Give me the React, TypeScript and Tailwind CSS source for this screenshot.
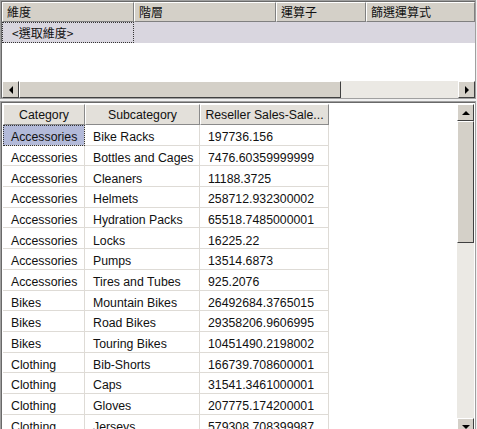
import React from 'react';

const rows: [string, string, string][] = [
  ['Accessories', 'Bike Racks', '197736.156'],
  ['Accessories', 'Bottles and Cages', '7476.60359999999'],
  ['Accessories', 'Cleaners', '11188.3725'],
  ['Accessories', 'Helmets', '258712.932300002'],
  ['Accessories', 'Hydration Packs', '65518.7485000001'],
  ['Accessories', 'Locks', '16225.22'],
  ['Accessories', 'Pumps', '13514.6873'],
  ['Accessories', 'Tires and Tubes', '925.2076'],
  ['Bikes', 'Mountain Bikes', '26492684.3765015'],
  ['Bikes', 'Road Bikes', '29358206.9606995'],
  ['Bikes', 'Touring Bikes', '10451490.2198002'],
  ['Clothing', 'Bib-Shorts', '166739.708600001'],
  ['Clothing', 'Caps', '31541.3461000001'],
  ['Clothing', 'Gloves', '207775.174200001'],
  ['Clothing', 'Jerseys', '579308.708399987'],
];

const btn =
  'bg-[#d4d0c8] border border-t-white border-l-white border-r-[#404040] border-b-[#404040] flex items-center justify-center shrink-0';

const Arrow = ({ dir }: { dir: 'left' | 'right' | 'up' | 'down' }) => {
  const pts = {
    left: '5,0 5,8 1,4',
    right: '1,0 1,8 5,4',
    up: '0,5 8,5 4,1',
    down: '0,1 8,1 4,5',
  }[dir];
  const vertical = dir === 'up' || dir === 'down';
  return (
    <svg width={vertical ? 8 : 6} height={vertical ? 6 : 8} viewBox={vertical ? '0 0 8 6' : '0 0 6 8'}>
      <polygon points={pts} fill="#000" />
    </svg>
  );
};

const headCls =
  'h-full flex items-center px-[4px] bg-[#d4d0c8] border border-t-white border-l-white border-r-[#808080] border-b-[#808080] shrink-0';

const gridHead =
  'h-full flex items-center justify-center pt-[1px] bg-[#e3e0da] border border-t-white border-l-white border-r-[#8a8a8a] border-b-[#8a8a8a] whitespace-nowrap overflow-hidden';

const cell = 'h-full flex items-center pl-[8px] pt-[5px] border-r border-b border-[#dedbd6] whitespace-nowrap overflow-hidden';

export default function App() {
  return (
    <div
      className="w-[477px] h-[429px] bg-[#f0f0f0] flex flex-col overflow-hidden text-[#111]"
      style={{ fontFamily: '"Liberation Sans", Arial, "Noto Sans CJK TC", sans-serif' }}
    >
      {/* filter panel */}
      <div className="w-[476px] h-[99px] border border-[#a0a0a0] bg-white shrink-0">
        <div className="w-full h-full border-l border-t border-[#696969] flex flex-col">
          <div
            className="h-[20px] flex text-[12px] shrink-0"
            style={{ fontFamily: '"Noto Sans CJK TC", "Liberation Sans", sans-serif' }}
          >
            <div className={`${headCls} w-[132px]`}>維度</div>
            <div className={`${headCls} w-[142px]`}>階層</div>
            <div className={`${headCls} w-[90px]`}>運算子</div>
            <div className={`${headCls} flex-1`}>篩選運算式</div>
          </div>
          <div
            className="h-[21px] flex bg-[#d9d6df] text-[12px] shrink-0"
            style={{ fontFamily: '"Noto Sans CJK TC", "Liberation Sans", sans-serif' }}
          >
            <div className="w-[132px] h-full flex items-center pl-[9px] border border-dotted border-[#333]">
              &lt;選取維度&gt;
            </div>
          </div>
          <div className="flex-1" />
          <div className="h-[17px] flex bg-[#ebe9e4] shrink-0">
            <div className={`${btn} w-[17px]`}>
              <Arrow dir="left" />
            </div>
            <div className={`${btn} w-[322px]`} />
            <div className="flex-1" />
            <div className={`${btn} w-[17px]`}>
              <Arrow dir="right" />
            </div>
          </div>
        </div>
      </div>

      <div className="h-[2px] shrink-0" />

      {/* data grid */}
      <div className="w-[476px] flex-1 border border-[#a0a0a0] bg-white">
        <div className="w-full h-full border-l border-t border-[#696969] flex pl-[1px] pt-[1px]">
          <div className="flex-1 flex flex-col text-[12.3px] overflow-hidden">
            <div className="h-[21px] flex shrink-0">
              <div className={`${gridHead} w-[82px]`}>Category</div>
              <div className={`${gridHead} w-[115px]`}>Subcategory</div>
              <div className={`${gridHead} w-[129px]`}>Reseller Sales-Sale...</div>
            </div>
            {rows.map((r, i) => (
              <div key={i} className="h-[20.7px] flex shrink-0">
                <div
                  className={`${cell} w-[82px] ${
                    i === 0 ? 'bg-[#b3bad9] outline-1 outline-dotted outline-[#333] -outline-offset-1' : ''
                  }`}
                >
                  {r[0]}
                </div>
                <div className={`${cell} w-[115px]`}>{r[1]}</div>
                <div className={`${cell} w-[129px]`}>{r[2]}</div>
              </div>
            ))}
          </div>
          <div className="w-[17px] flex flex-col bg-[#ebe9e4] shrink-0 mr-[1px]">
            <div className={`${btn} h-[17px]`}>
              <Arrow dir="up" />
            </div>
            <div className={`${btn} h-[122px]`} />
            <div className="flex-1" />
            <div className={`${btn} h-[17px]`}>
              <Arrow dir="down" />
            </div>
          </div>
        </div>
      </div>
    </div>
  );
}
